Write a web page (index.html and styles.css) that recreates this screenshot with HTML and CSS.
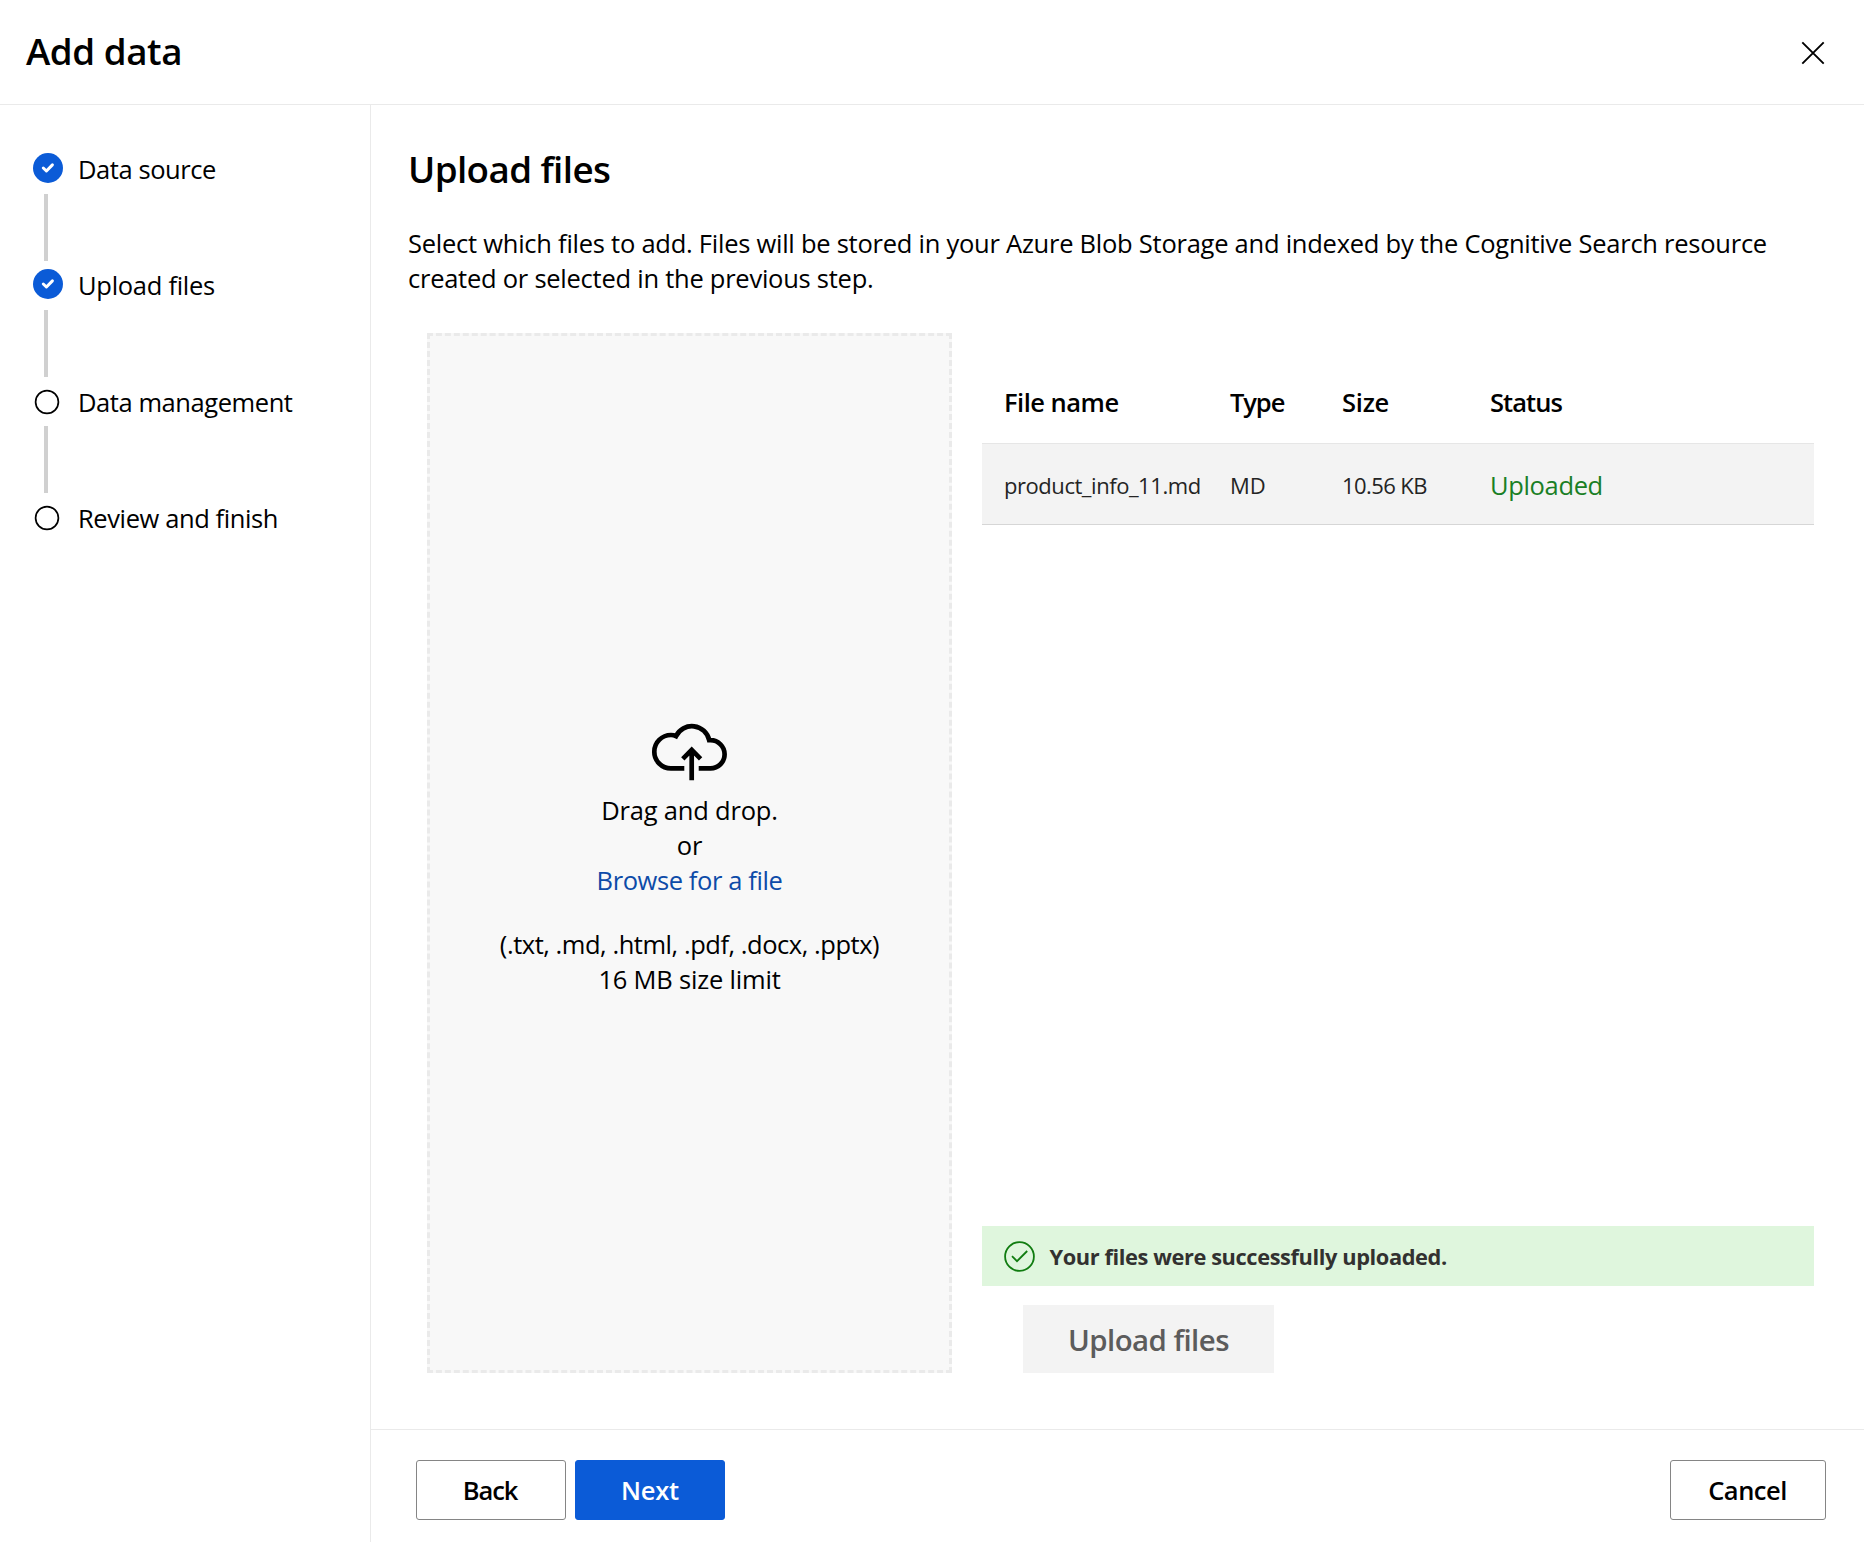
FILE: index.html
```
<!DOCTYPE html>
<html lang="en">
<head>
<meta charset="utf-8">
<title>Add data</title>
<link rel="stylesheet" href="styles.css">
</head>
<body>
<div class="dialog">
  <header class="dialog-header">
    <h1 class="dialog-title">Add data</h1>
    <button class="close" aria-label="Close">
      <svg width="24" height="24" viewBox="0 0 24 24"><path d="M1.3 1.3 22.7 22.7M22.7 1.3 1.3 22.7"/></svg>
    </button>
  </header>
  <div class="dialog-body">
    <nav class="sidebar">
      <ol class="steps">
        <li class="step">
          <div class="marker">
            <svg class="done" width="30" height="30" viewBox="0 0 30 30"><circle cx="15" cy="15" r="15"/><path d="M10.3 15 13.4 18 19.4 11.9"/></svg>
            <div class="connector"></div>
          </div>
          <span class="label label-source">Data source</span>
        </li>
        <li class="step">
          <div class="marker">
            <svg class="done" width="30" height="30" viewBox="0 0 30 30"><circle cx="15" cy="15" r="15"/><path d="M10.3 15 13.4 18 19.4 11.9"/></svg>
            <div class="connector"></div>
          </div>
          <span class="label label-upload">Upload files</span>
        </li>
        <li class="step pending">
          <div class="marker">
            <svg class="todo" width="30" height="30" viewBox="0 0 30 30"><circle cx="14" cy="17" r="11.4"/></svg>
            <div class="connector"></div>
          </div>
          <span class="label label-manage">Data management</span>
        </li>
        <li class="step pending">
          <div class="marker">
            <svg class="todo" width="30" height="30" viewBox="0 0 30 30"><circle cx="14" cy="17" r="11.4"/></svg>
          </div>
          <span class="label label-review">Review and finish</span>
        </li>
      </ol>
    </nav>
    <main class="main">
      <section class="content">
        <h2 class="page-title">Upload files</h2>
        <p class="intro">Select which files to add. Files will be stored in your Azure Blob Storage and indexed by the Cognitive Search resource created or selected in the previous step.</p>
        <div class="upload">
          <div class="dropzone">
            <svg class="cloud" width="76" height="57" viewBox="0 0 76 57">
              <path d="M32.3 44.4H19A16.7 16.7 0 0 1 19 11Q21.8 11 24 12.1A17.7 17.7 0 0 1 57.2 16.2H58.5A14.1 14.1 0 0 1 58.5 44.4H46.7"/>
              <path d="M39.7 56.2V26M30.8 34.8 39.7 25.9 48.6 34.8"/>
            </svg>
            <p class="drop-text">
              <span class="t-drag">Drag and drop.</span>
              <span>or</span>
              <a class="browse">Browse for a file</a>
            </p>
            <p class="drop-text drop-hint">
              <span class="t-types">(.txt, .md, .html, .pdf, .docx, .pptx)</span>
              <span class="t-limit">16 MB size limit</span>
            </p>
          </div>
          <div class="panel">
            <div class="table">
              <div class="row head">
                <span class="c-name">File name</span><span class="c-type">Type</span><span class="c-size">Size</span><span class="c-status">Status</span>
              </div>
              <div class="row file">
                <span>product_info_11.md</span><span class="f-type">MD</span><span class="f-size">10.56 KB</span><span class="uploaded">Uploaded</span>
              </div>
            </div>
            <div class="message">
              <svg width="31" height="31" viewBox="0 0 31 31"><circle cx="15.5" cy="15.5" r="14.4"/><path d="M8 15.2 13 20.2 23.2 10"/></svg>
              <span>Your files were successfully uploaded.</span>
            </div>
            <button class="upload-btn" disabled>Upload files</button>
          </div>
        </div>
      </section>
      <footer class="footer">
        <button class="btn back">Back</button>
        <button class="btn primary">Next</button>
        <button class="btn cancel">Cancel</button>
      </footer>
    </main>
  </div>
</div>
</body>
</html>
```
FILE: styles.css
```
* { box-sizing: border-box; }
body {
  margin: 0;
  background: #fff;
  color: #000;
  font: 25.5px/35px "Open Sans", "Noto Sans", sans-serif;
  letter-spacing: -0.25px;
}
h1, h2, p, ol { margin: 0; padding: 0; }
svg { display: block; fill: none; flex: none; overflow: visible; }
button { font: inherit; letter-spacing: inherit; color: inherit; background: none; border: 0; padding: 0; }

.dialog { height: 1542px; display: flex; flex-direction: column; overflow: hidden; }
.dialog-header {
  height: 105px;
  display: flex;
  align-items: center;
  justify-content: space-between;
  padding: 0 39.5px 0 26px;
  border-bottom: 1px solid #eaeaea;
}
.dialog-title { font-size: 36.75px; line-height: 50px; font-weight: 600; letter-spacing: -0.45px; margin-bottom: 3px; }
.close svg { stroke: #000; stroke-width: 1.9; margin-top: 2px; }

.dialog-body { flex: 1; display: flex; min-height: 0; }
.sidebar { width: 371px; flex: none; border-right: 1px solid #eaeaea; padding: 48px 0 0 33px; }
.steps { list-style: none; }
.step { height: 116px; display: flex; gap: 15px; }
.marker { width: 30px; }
.done circle { fill: #0b5bd7; }
.done path { stroke: #fff; stroke-width: 3; stroke-linecap: round; stroke-linejoin: round; }
.todo circle { stroke: #000; stroke-width: 1.7; }
.connector { width: 4px; height: 67px; margin: 11px 0 0 11px; background: #d0d0d0; }
.label { line-height: 34px; margin-top: -1px; }
.pending .label { margin-top: 0; }
.label-source, .label-manage { letter-spacing: -0.43px; }
.label-upload { letter-spacing: -0.28px; }
.label-review { letter-spacing: -0.4px; }

.main { flex: 1; display: flex; flex-direction: column; min-width: 0; }
.content { flex: 1; padding: 39px 50px 0 37px; }
.page-title { font-size: 36.75px; line-height: 50px; font-weight: 600; letter-spacing: -0.6px; }
.intro { margin-top: 32px; }
.upload { margin-top: 37px; padding-left: 19px; height: 1040px; display: flex; gap: 30px; }

.dropzone {
  width: 525px;
  flex: none;
  border: 3px dashed #eaeaea;
  background: #f8f8f8;
  display: flex;
  flex-direction: column;
  align-items: center;
  padding-top: 388px;
}
.cloud { stroke: #000; stroke-width: 4.7; }
.drop-text { margin-top: 12px; display: flex; flex-direction: column; align-items: center; }
.drop-hint { margin-top: 29px; }
.t-drag { letter-spacing: -0.2px; }
.browse { color: #0d4ba8; letter-spacing: -0.4px; }
.t-types { letter-spacing: -0.46px; }
.t-limit { letter-spacing: -0.2px; }

.panel { flex: 1; display: flex; flex-direction: column; padding-top: 28px; }
.row {
  height: 82px;
  display: grid;
  grid-template-columns: 226px 112px 148px 1fr;
  align-items: center;
  padding-left: 22px;
}
.head { font-weight: 600; }
.c-name { letter-spacing: -0.5px; }
.c-type { letter-spacing: -1.1px; }
.c-status { letter-spacing: -0.95px; }
.file {
  padding-top: 2px;
  font-size: 22px;
  letter-spacing: -0.45px;
  color: #242424;
  background: #f3f3f3;
  border-top: 1px solid #e6e6e6;
  border-bottom: 1px solid #d6d6d6;
}
.f-type { letter-spacing: 0; }
.f-size { letter-spacing: -0.58px; }
.uploaded { font-size: 25.5px; letter-spacing: -0.35px; color: #1a7f25; }

.message {
  margin-top: auto;
  height: 60px;
  display: flex;
  align-items: center;
  gap: 15px;
  padding-left: 21.5px;
  background: #dff6dd;
  color: #323130;
  font-size: 21.8px;
  font-weight: 700;
  letter-spacing: -0.4px;
}
.message svg { stroke: #107c10; stroke-width: 1.8; }
.upload-btn {
  width: 251px;
  height: 68px;
  margin: 19px 0 0 41px;
  padding-top: 2px;
  background: #f3f3f3;
  color: #5c5c5c;
  font-size: 29.4px;
  font-weight: 600;
  letter-spacing: -0.56px;
}

.footer {
  height: 113px;
  flex: none;
  display: flex;
  gap: 9px;
  padding: 30px 38px 0 45px;
  border-top: 1px solid #eaeaea;
}
.btn {
  width: 150px;
  height: 60px;
  padding-top: 1px;
  border: 1px solid #858585;
  border-radius: 3px;
  font-weight: 600;
}
.back { letter-spacing: -1.1px; padding-right: 2px; }
.primary { background: #0b5bd7; border-color: #0b5bd7; color: #fff; }
.cancel { width: 156px; margin-left: auto; letter-spacing: -0.5px; padding-right: 1px; }
```
